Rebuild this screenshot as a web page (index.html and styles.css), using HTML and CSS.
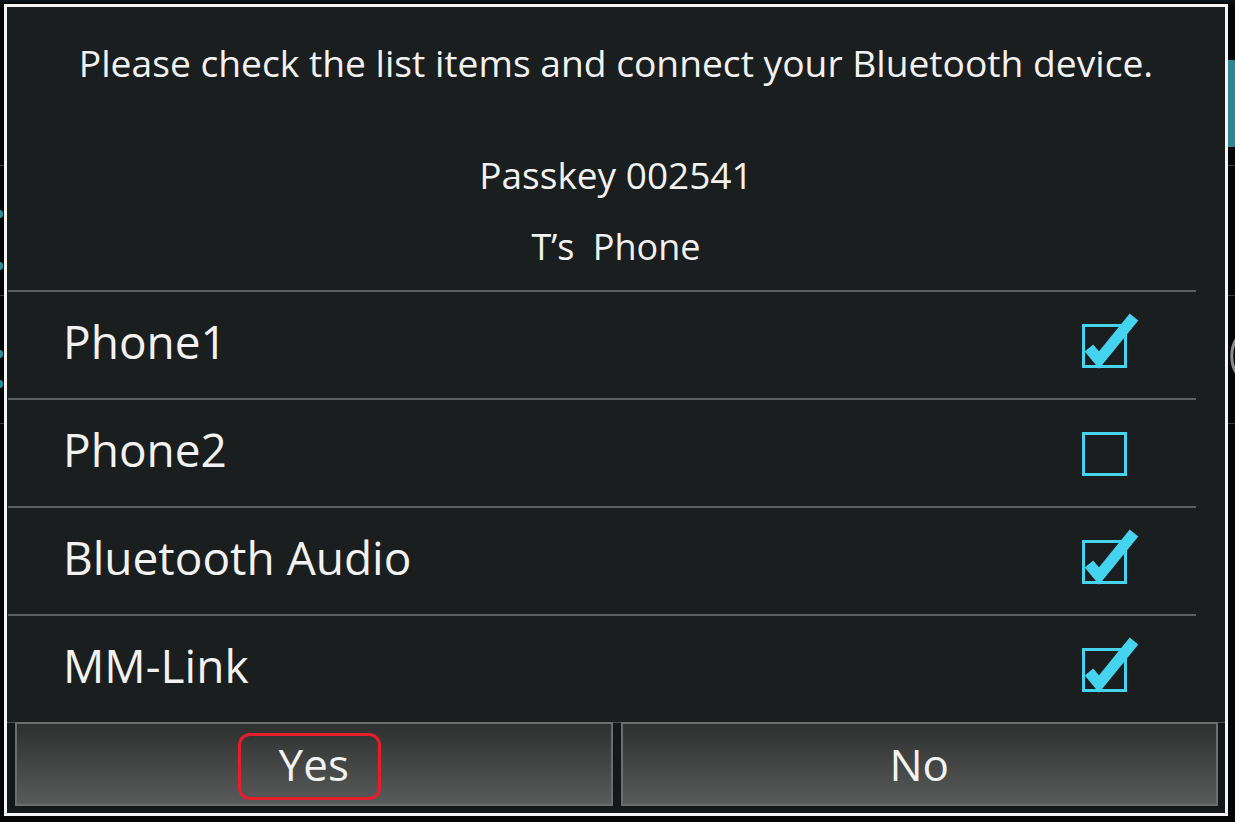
FILE: index.html
```html
<!DOCTYPE html>
<html lang="en">
<head>
  <meta charset="UTF-8">
  <meta name="viewport" content="width=device-width, initial-scale=1.0">
  <title>Bluetooth Pairing</title>
  <link rel="stylesheet" href="styles.css">
</head>
<body>
  <div class="screen">
    <!-- bits of the app screen behind the dialog -->
    <div class="behind">
      <span class="bg-tile"></span>
      <span class="bg-line bg-line-1"></span>
      <span class="bg-line bg-line-2"></span>
      <span class="bg-line bg-line-3"></span>
      <span class="bg-dot bg-dot-1"></span>
      <span class="bg-dot bg-dot-2"></span>
      <span class="bg-dot bg-dot-3"></span>
      <span class="bg-dot bg-dot-4"></span>
      <svg class="bg-arc" viewBox="0 0 12 40" width="12" height="40">
        <path d="M10 2 C3 12 3 28 10 38" fill="none" stroke="#8a8c8d" stroke-width="3"/>
      </svg>
    </div>

    <div class="dialog">
      <div class="dialog-head">
        <p class="message">Please check the list items and connect your Bluetooth device.</p>
        <p class="passkey">Passkey 002541</p>
        <p class="device">T’s Phone</p>
      </div>

      <ul class="profile-list">
        <li class="profile">
          <span class="profile-name">Phone1</span>
          <svg class="checkbox" viewBox="0 0 64 64" width="64" height="64">
            <rect x="5.5" y="15.5" width="42" height="41" fill="none" stroke="#45d4f0" stroke-width="3"/>
            <polyline points="11,38 21,50 56,7" fill="none" stroke="#45d4f0" stroke-width="11"/>
          </svg>
        </li>
        <li class="profile">
          <span class="profile-name">Phone2</span>
          <svg class="checkbox" viewBox="0 0 64 64" width="64" height="64">
            <rect x="5.5" y="15.5" width="42" height="41" fill="none" stroke="#45d4f0" stroke-width="3"/>
          </svg>
        </li>
        <li class="profile">
          <span class="profile-name">Bluetooth Audio</span>
          <svg class="checkbox" viewBox="0 0 64 64" width="64" height="64">
            <rect x="5.5" y="15.5" width="42" height="41" fill="none" stroke="#45d4f0" stroke-width="3"/>
            <polyline points="11,38 21,50 56,7" fill="none" stroke="#45d4f0" stroke-width="11"/>
          </svg>
        </li>
        <li class="profile">
          <span class="profile-name">MM-Link</span>
          <svg class="checkbox" viewBox="0 0 64 64" width="64" height="64">
            <rect x="5.5" y="15.5" width="42" height="41" fill="none" stroke="#45d4f0" stroke-width="3"/>
            <polyline points="11,38 21,50 56,7" fill="none" stroke="#45d4f0" stroke-width="11"/>
          </svg>
        </li>
      </ul>

      <div class="button-bar">
        <button class="btn btn-yes">Yes<span class="highlight"></span></button>
        <button class="btn">No</button>
      </div>
    </div>
  </div>
</body>
</html>
```

FILE: styles.css
```css
:root {
  --dialog-bg: #1a1e1f;
  --text-color: #f2f2f2;
  --rule-color: #5c5f60;
  --accent: #45d4f0;
  --mark-red: #e41f2b;
}

* {
  box-sizing: border-box;
}

body {
  margin: 0;
  padding: 0;
  background-color: #030506;
  font-family: 'Open Sans', 'DejaVu Sans', sans-serif;
  color: var(--text-color);
  width: 1235px;
  height: 822px;
  overflow: hidden;
}

.screen {
  position: relative;
  width: 1235px;
  height: 822px;
  padding: 4px 7px 4px 4px;
  background: linear-gradient(#0b1420 0, #030506 5px);
}

/* background app */
.behind > * {
  position: absolute;
}

.bg-tile {
  right: 0;
  top: 60px;
  width: 8px;
  height: 87px;
  background-color: #2b8790;
}

.bg-line {
  height: 1px;
  left: 0;
  right: 0;
  background-color: #3a3d3f;
}

.bg-line-1 { top: 165px; }
.bg-line-2 { top: 295px; }
.bg-line-3 { top: 423px; }

.bg-dot {
  left: 0;
  width: 3px;
  height: 8px;
  background-color: #2a8e9a;
  border-radius: 0 3px 3px 0;
}

.bg-dot-1 { top: 210px; }
.bg-dot-2 { top: 262px; }
.bg-dot-3 { top: 350px; }
.bg-dot-4 { top: 380px; }

.bg-arc {
  right: -4px;
  top: 336px;
}

/* dialog */
.dialog {
  position: relative;
  display: flex;
  flex-direction: column;
  height: 812px;
  border: 3px solid #f4f4f4;
  background-color: var(--dialog-bg);
}

.dialog-head {
  height: 283px;
  padding-top: 32px;
  text-align: center;
}

.dialog-head p {
  margin: 0;
  font-size: 37px;
  line-height: 48px;
}

.dialog-head .message {
  font-size: 37.2px;
}

.dialog-head .passkey {
  margin-top: 64px;
}

.dialog-head .device {
  margin-top: 24px;
  font-size: 36px;
  word-spacing: 9px;
}

.profile-list {
  list-style: none;
  margin: 0 29px 0 1px;
  padding: 0;
}

.profile {
  display: flex;
  align-items: center;
  justify-content: space-between;
  height: 108px;
  padding: 0 54px 0 55px;
  border-top: 2px solid var(--rule-color);
}

.profile-name {
  font-size: 46px;
  margin-top: -8px;
}

.checkbox {
  display: block;
  margin-top: -6px;
}

.button-bar {
  display: grid;
  grid-template-columns: 1fr 1fr;
  gap: 8px;
  flex: 1;
  padding: 0 7px 7px 8px;
  border-top: 1px solid #4a4d4e;
  background-color: #151818;
}

.btn {
  position: relative;
  font-family: inherit;
  font-size: 44px;
  color: var(--text-color);
  border: 2px solid #6c6e6e;
  background: linear-gradient(#2e2f2f, #595a5a);
  padding: 0;
  margin-top: -1px;
  cursor: pointer;
}

.highlight {
  position: absolute;
  left: 221px;
  top: 9px;
  width: 143px;
  height: 67px;
  border: 3px solid var(--mark-red);
  border-radius: 12px;
}
```
